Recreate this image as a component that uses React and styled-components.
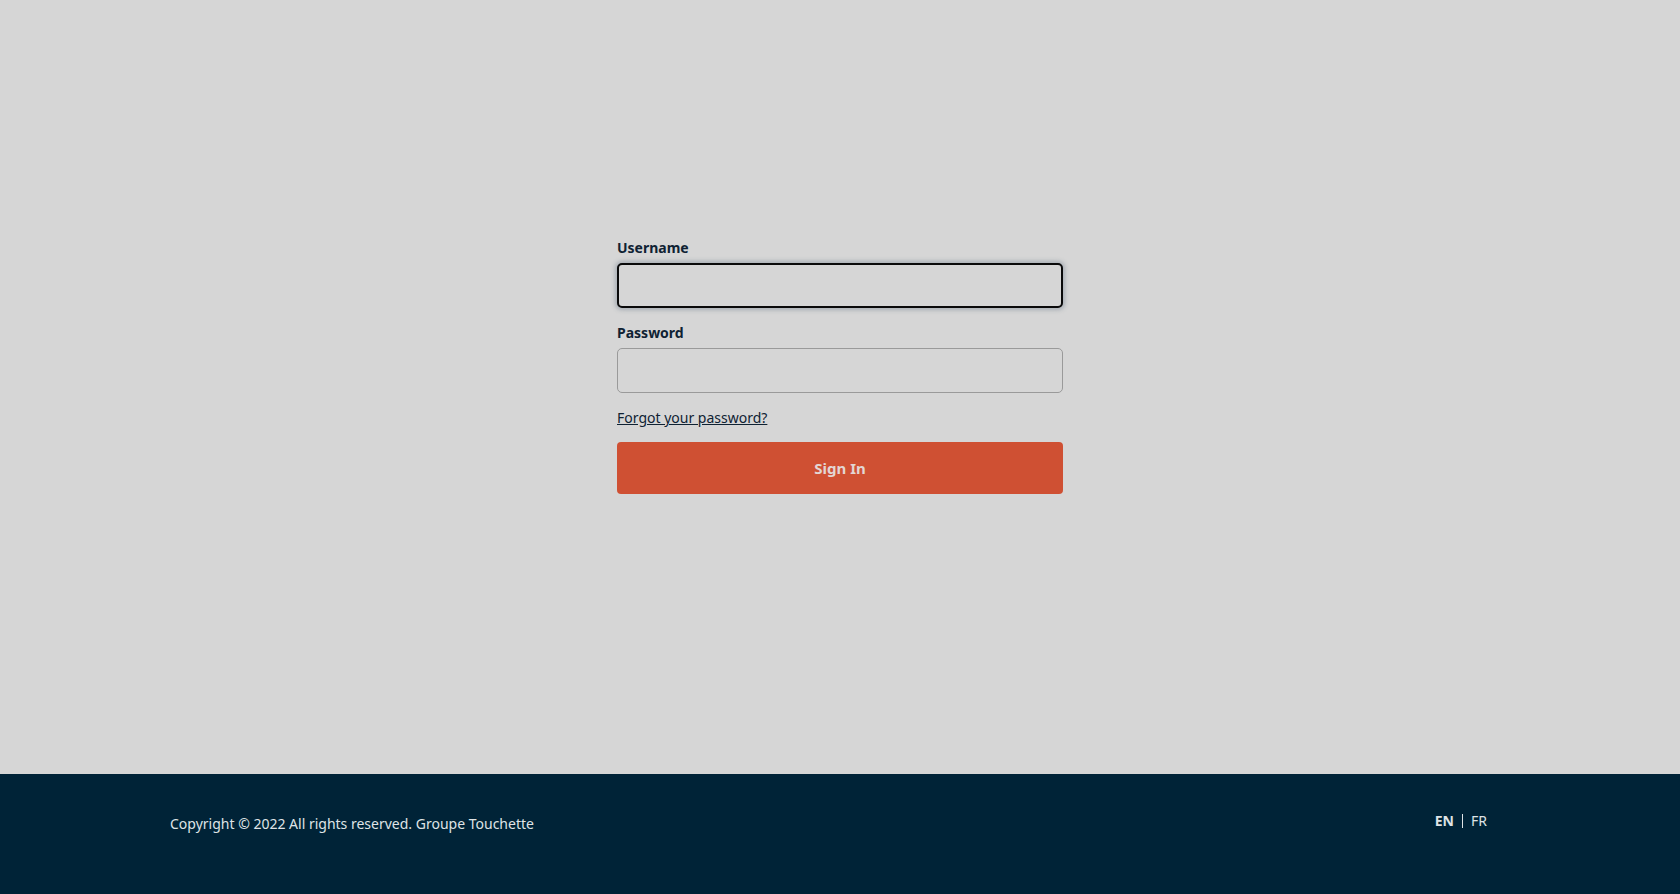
import React from 'react';
import styled, { createGlobalStyle } from 'styled-components';

const GlobalStyle = createGlobalStyle`
  html, body {
    margin: 0;
    padding: 0;
    background-color: #d6d6d6;
    font-family: 'Noto Sans', 'Open Sans', sans-serif;
  }
  * {
    box-sizing: border-box;
  }
`;

const App = () => {
  return (
    <>
      <GlobalStyle />
      <Page>
        <Main>
          <LoginForm onSubmit={e => e.preventDefault()}>
            <Field>
              <Label htmlFor="username">Username</Label>
              <Input id="username" type="text" focused autoFocus />
            </Field>
            <Field>
              <Label htmlFor="password">Password</Label>
              <Input id="password" type="password" />
            </Field>
            <ForgotLink href="#">Forgot your password?</ForgotLink>
            <SubmitButton type="submit">Sign In</SubmitButton>
          </LoginForm>
        </Main>
        <Footer>
          <FooterInner>
            <Copyright>Copyright © 2022 All rights reserved. Groupe Touchette</Copyright>
            <LangSwitch>
              <LangLink active>EN</LangLink>
              <LangDivider />
              <LangLink>FR</LangLink>
            </LangSwitch>
          </FooterInner>
        </Footer>
      </Page>
    </>
  );
};

const Page = styled.div`
  display: flex;
  flex-direction: column;
  min-height: 100vh;
`;

const Main = styled.main`
  flex: 1;
  display: flex;
  justify-content: center;
  padding-top: 238px;
  height: 774px;
`;

const LoginForm = styled.form`
  width: 446px;
  display: flex;
  flex-direction: column;
`;

const Field = styled.div`
  display: flex;
  flex-direction: column;
  margin-bottom: 15px;
`;

const Label = styled.label`
  color: #0f2233;
  font-size: 14px;
  font-weight: 700;
  line-height: 20px;
  margin-bottom: 5px;
`;

const Input = styled.input`
  height: 45px;
  width: 100%;
  background-color: #d6d6d6;
  border: ${props => props.focused ? '2px solid #0a0a0a' : '1px solid #9a9a9a'};
  border-radius: 5px;
  box-shadow: ${props => props.focused ? '0 0 4px 2px rgba(110, 125, 140, 0.45)' : 'none'};
  padding: 0 12px;
  font-family: inherit;
  font-size: 14px;
  color: #222;
  outline: none;
`;

const ForgotLink = styled.a`
  color: #0f2233;
  font-size: 14px;
  line-height: 20px;
  text-decoration: underline;
  align-self: flex-start;
  margin-bottom: 14px;
`;

const SubmitButton = styled.button`
  height: 52px;
  width: 100%;
  border: none;
  border-radius: 4px;
  background-color: #cf5033;
  color: #e3d6d4;
  font-family: inherit;
  font-size: 15px;
  font-weight: 700;
  cursor: pointer;
`;

const Footer = styled.footer`
  background-color: #002337;
  height: 120px;
`;

const FooterInner = styled.div`
  display: flex;
  justify-content: space-between;
  align-items: flex-start;
  padding: 36px 193px 0 170px;
`;

const Copyright = styled.p`
  margin: 4px 0 0;
  color: #dfe3e6;
  font-size: 14px;
  line-height: 20px;
`;

const LangSwitch = styled.div`
  display: flex;
  align-items: center;
  gap: 8px;
  margin-top: 1px;
`;

const LangLink = styled.span`
  color: #dfe3e6;
  font-size: 14px;
  line-height: 20px;
  font-weight: ${props => props.active ? 700 : 400};
  cursor: pointer;
`;

const LangDivider = styled.span`
  width: 1px;
  height: 14px;
  background-color: #dfe3e6;
`;

export default App;
